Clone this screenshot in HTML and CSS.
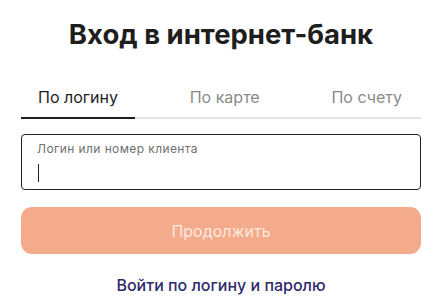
FILE: index.html
```html
<!DOCTYPE html>
<html lang="ru">
<head>
    <meta charset="UTF-8">
    <meta name="viewport" content="width=device-width, initial-scale=1.0">
    <title>Вход в интернет-банк</title>
    <link rel="stylesheet" href="styles.css">
</head>
<body>
    <div class="login">
        <h1>Вход в интернет-банк</h1>

        <div class="tabs">
            <div class="tab active">По логину</div>
            <div class="tab">По карте</div>
            <div class="tab">По счету</div>
        </div>

        <label class="field">
            <span class="field-label">Логин или номер клиента</span>
            <span class="caret"></span>
        </label>

        <button class="submit">Продолжить</button>

        <a class="alt-link" href="#">Войти по логину и паролю</a>
    </div>
</body>
</html>
```

FILE: styles.css
```css
body {
    margin: 0;
    background-color: #fff;
    font-family: Inter, "Noto Sans", Arial, sans-serif;
}
.login {
    width: 400px;
    margin: 0 auto;
    padding-top: 17px;
}
h1 {
    margin: 0;
    font-size: 27.5px;
    line-height: 34px;
    font-weight: 700;
    color: #1e1e1e;
    text-align: center;
}
.tabs {
    display: flex;
    justify-content: space-between;
    margin-top: 35px;
    border-bottom: 2px solid #e4e4e4;
}
.tab {
    padding: 0 17px 9px;
    font-size: 16px;
    line-height: 22px;
    color: #8a8a8a;
    margin-bottom: -2px;
    border-bottom: 2px solid transparent;
}
.tab:last-child {
    padding-right: 19px;
}
.tab.active {
    color: #1e1e1e;
    border-bottom-color: #1e1e1e;
}
.field {
    display: block;
    box-sizing: border-box;
    height: 56px;
    margin-top: 15px;
    padding: 6px 15px 0;
    border: 1px solid #222;
    border-radius: 4px;
}
.field-label {
    display: block;
    font-size: 12px;
    line-height: 15px;
    letter-spacing: 0.4px;
    color: #707070;
}
.caret {
    display: block;
    width: 1px;
    height: 18px;
    margin: 8px 0 0 1px;
    background-color: #222;
}
.submit {
    display: block;
    width: 100%;
    height: 47px;
    margin-top: 17px;
    border: none;
    border-radius: 11px;
    background-color: #f4ab8c;
    color: #fde9df;
    font-family: inherit;
    font-size: 16px;
}
.alt-link {
    display: block;
    margin-top: 21px;
    text-align: center;
    font-size: 16px;
    font-weight: 500;
    color: #2d2a6b;
    text-decoration: none;
}
```
